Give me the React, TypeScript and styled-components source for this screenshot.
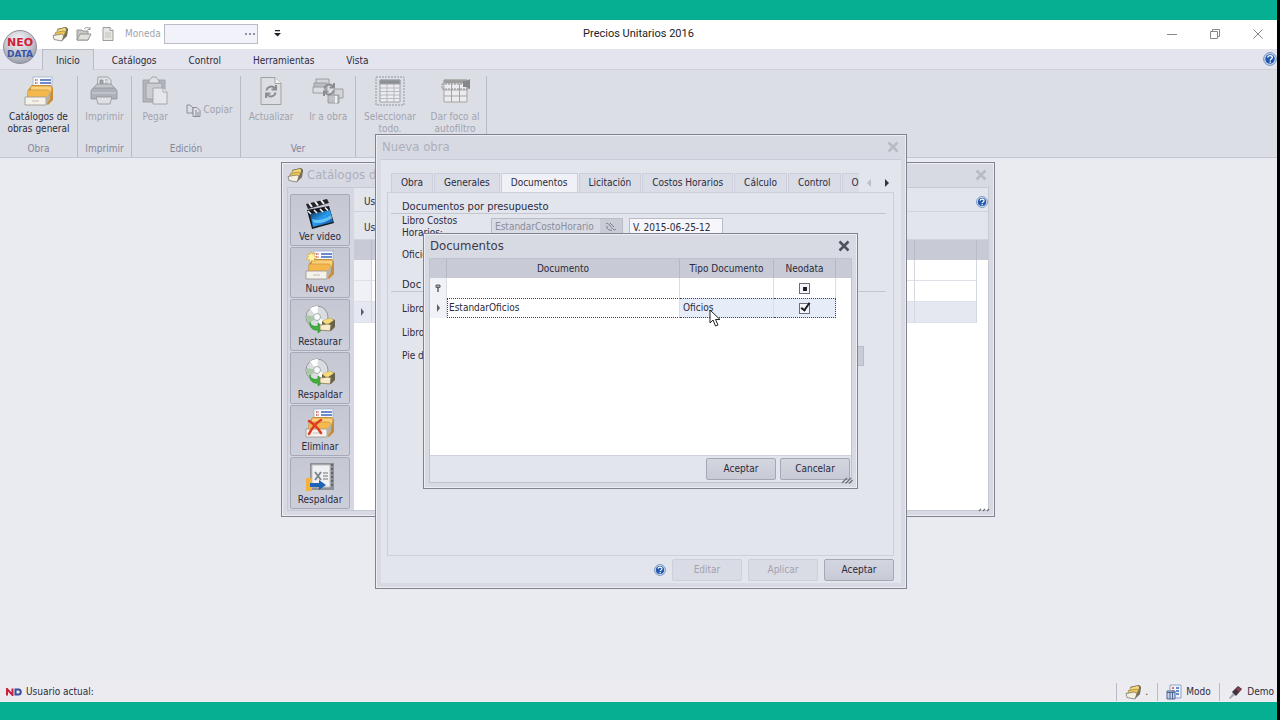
import React, { ReactNode } from "react";
import styled, { createGlobalStyle, css } from "styled-components";

const c = {
  teal: "#06ae92",
  ribbon: "#dcdee6",
  line: "#b9bbc7",
  frame: "#80828f",
  header: "#c8cad5",
  panel: "#e3e5ed",
  text: "#2b2b3c",
  muted: "#a2a3ae",
};

const Global = createGlobalStyle`
  *, *::before, *::after { box-sizing: border-box; }
  body { margin: 0; }
  body, button, input, select, table {
    font-family: "DejaVu Sans Condensed", Tahoma, "Noto Sans", sans-serif;
    font-size: 10px;
    line-height: 12px;
    color: ${c.text};
  }
  button { cursor: default; }
  svg { display: block; flex: none; }
`;

/* ---------- Shell ---------- */

const Shell = styled.div`
  display: flex;
  flex-direction: column;
  min-height: 100vh;
  overflow: hidden;
  border-right: 3px solid #000;
  background: ${c.teal};
`;
const Band = styled.div<{ $h: number }>`
  height: ${(p) => p.$h}px;
  background: ${c.teal};
`;
const AppFrame = styled.div`
  position: relative;
  flex: 1;
  display: flex;
  flex-direction: column;
  background: #e9ebf0;
`;

const TitleBar = styled.header`
  display: grid;
  grid-template-columns: 1fr auto 1fr;
  align-items: center;
  height: 29px;
  padding-bottom: 2px;
  background: #fff;
`;
const QuickAccess = styled.div`
  display: flex;
  align-items: center;
  padding-left: 48px;
`;
const ToolButton = styled.button`
  display: flex;
  justify-content: center;
  width: 24px;
  padding: 0;
  border: 0;
  background: none;
`;
const CurrencyLabel = styled.label`
  display: flex;
  align-items: center;
  gap: 3px;
  margin-left: 5px;
  color: ${c.muted};
`;
const CurrencyBox = styled.span`
  display: flex;
  align-items: center;
  width: 94px;
  height: 20px;
  padding-right: 2px;
  border: 1px solid ${c.line};
  background: #f2f2fa;
  input { flex: 1; min-width: 0; height: 16px; border: 0; background: none; }
`;
const MoreButton = styled(ToolButton)`
  margin-left: 8px;
`;
const AppTitle = styled.h1`
  margin: 0;
  font: 400 11px/16px Roboto, "Noto Sans", sans-serif;
  color: #222;
`;
const WindowButtons = styled.div`
  display: flex;
  justify-content: flex-end;
  gap: 19px;
  padding-right: 7px;
`;

const TabRow = styled.nav`
  display: flex;
  align-items: flex-end;
  gap: 4px;
  height: 21px;
  padding-left: 42px;
  border-bottom: 1px solid #cfd0db;
  background: #e4e4ee;
`;
const RibbonTab = styled.button<{ $active?: boolean }>`
  height: 21px;
  margin-bottom: -1px;
  padding: 1px 13px 0;
  border: 1px solid transparent;
  border-bottom: 0;
  background: transparent;
  white-space: nowrap;
  ${(p) => p.$active && css`border-color: ${c.line}; background: ${c.ribbon};`}
`;
const TabHelp = styled.button`
  align-self: center;
  margin-left: auto;
  padding: 0;
  border: 0;
  background: none;
`;
const Logo = styled.div`
  position: absolute;
  left: 3px;
  top: 10px;
`;

const Ribbon = styled.section`
  display: flex;
  height: 88px;
  padding-top: 6px;
  border-bottom: 1px solid #c3c5d0;
  background: ${c.ribbon};
`;
const Group = styled.div<{ $w: number }>`
  display: flex;
  flex-direction: column;
  width: ${(p) => p.$w}px;
  border-right: 1px solid ${c.line};
`;
const GroupBody = styled.div`
  flex: 1;
  display: flex;
  justify-content: space-around;
`;
const GroupCaption = styled.div`
  height: 14px;
  text-align: center;
  color: #85869a;
`;
const RibbonButton = styled.button<{ $w?: number; $row?: boolean }>`
  display: flex;
  flex-direction: ${(p) => (p.$row ? "row" : "column")};
  align-items: center;
  gap: 3px;
  width: ${(p) => (p.$w ? p.$w + "px" : "auto")};
  padding: 0;
  border: 0;
  background: none;
  &:disabled { color: ${c.muted}; }
`;

const StatusBar = styled.footer`
  display: flex;
  align-items: center;
  height: 20px;
  padding: 0 3px 0 6px;
  background: #ebebf0;
`;
const StatusItem = styled.span<{ $sep?: boolean; $w?: number }>`
  display: flex;
  align-items: center;
  gap: 4px;
  height: 18px;
  width: ${(p) => (p.$w ? p.$w + "px" : "auto")};
  padding-left: ${(p) => (p.$sep ? 8 : 0)}px;
  border-left: ${(p) => (p.$sep ? "1px solid " + c.line : "0")};
  white-space: nowrap;
`;
const Spacer = styled.div`
  flex: 1;
`;

/* ---------- Windows ---------- */

const WindowBox = styled.section<{ $x: number; $y: number; $w: number; $h: number }>`
  position: absolute;
  left: ${(p) => p.$x}px;
  top: ${(p) => p.$y}px;
  width: ${(p) => p.$w}px;
  min-height: ${(p) => p.$h}px;
  display: flex;
  flex-direction: column;
  padding: 0 5px 5px;
  border: 1px solid ${c.frame};
  box-shadow: inset 0 0 0 1px #eceef4;
  background: #d8dae3;
`;
const WindowTitle = styled.header`
  display: flex;
  align-items: center;
  gap: 3px;
  height: 24px;
  flex: none;
`;
const WindowCaption = styled.h2<{ $muted?: boolean }>`
  flex: 1;
  margin: 0;
  padding-left: 1px;
  font-size: 13px;
  line-height: 16px;
  font-weight: 400;
  color: ${(p) => (p.$muted ? "#adafbb" : "#3b3b4a")};
`;
const CloseButton = styled.button`
  padding: 0 2px;
  border: 0;
  background: none;
`;
const CatalogBody = styled.div`
  flex: 1;
  display: flex;
  border: 1px solid #c6c8d3;
  background: ${c.panel};
`;
const Sidebar = styled.nav`
  display: flex;
  flex-direction: column;
  gap: 1px;
  width: 66px;
  padding: 6px 4px 1px 2px;
  background: #d5d7e1;
`;
const SideButton = styled.button`
  flex: 1;
  display: flex;
  flex-direction: column;
  align-items: center;
  justify-content: flex-end;
  gap: 1px;
  padding: 0 0 2px;
  border: 1px solid #a7a9b8;
  border-radius: 2px;
  background: linear-gradient(#c5c7d3, #cdcfda);
  white-space: nowrap;
`;
const CatalogMain = styled.div`
  flex: 1;
  display: flex;
  flex-direction: column;
  background: #fff;
`;
const CatalogRow = styled.div<{ $h: number }>`
  display: flex;
  align-items: center;
  justify-content: space-between;
  height: ${(p) => p.$h}px;
  padding: 4px 0 0 10px;
  border-bottom: 1px solid #d0d2dc;
  background: ${c.panel};
`;
const CatalogTable = styled.table`
  width: 100%;
  table-layout: fixed;
  border-spacing: 0;
  th { height: 20px; padding: 0; background: ${c.header}; border-right: 1px solid ${c.line}; }
  td { height: 21px; padding: 0; border-right: 1px solid #d5d7df; border-bottom: 1px solid #e0e1e8; }
  td:first-child { background: #f0f1f6; }
  th:last-child, td:last-child { border-right: 0; }
  td:last-child { border-bottom: 0; background: #fff; }
  tr[aria-selected] td:not(:last-child) { background: #e6e8f1; }
  svg { margin: 0 auto; }
`;
const GripLine = styled.div`
  position: absolute;
  right: 4px;
  bottom: 4px;
`;

const DialogBody = styled.div`
  flex: 1;
  display: flex;
  flex-direction: column;
  padding: 13px 7px 0 6px;
  border-top: 1px solid #c9cbd6;
  background: ${c.panel};
`;
const DialogTabs = styled.div`
  display: flex;
  align-items: stretch;
  gap: 1px;
  height: 19px;
  padding-left: 4px;
`;
const DialogTab = styled.button<{ $active?: boolean; $clip?: boolean }>`
  padding: ${(p) => (p.$clip ? "0 0 0 9px" : "0 9px")};
  border: 1px solid #cccedb;
  border-bottom: 0;
  ${(p) => p.$clip && css`border-right: 0;`}
  background: ${(p) => (p.$active ? "#f0f1f7" : "#dadce6")};
  white-space: nowrap;
`;
const ScrollArrows = styled.div`
  display: flex;
  align-items: center;
  gap: 4px;
  margin-left: auto;
`;
const ArrowButton = styled.button`
  display: flex;
  justify-content: center;
  width: 14px;
  padding: 0;
  border: 0;
  background: none;
`;
const TabPanel = styled.div`
  flex: 1;
  display: flex;
  flex-direction: column;
  padding: 7px 7px 0 3px;
  border: 1px solid #cdcfda;
`;
const SectionTitle = styled.h3`
  margin: 0;
  padding-left: 11px;
  font-size: 11px;
  line-height: 13px;
  font-weight: 400;
  border-bottom: 1px solid #c3c5d0;
`;
const Field = styled.div<{ $h: number }>`
  display: flex;
  align-items: center;
  gap: 6px;
  height: ${(p) => p.$h}px;
  padding: 0 22px 0 11px;
  label { width: 83px; }
`;
const TextBox = styled.input<{ $w: number }>`
  width: ${(p) => p.$w}px;
  height: 18px;
  padding: 0 3px;
  border: 1px solid ${c.line};
  background: #f6f6fb;
`;
const LookupBox = styled.span`
  display: flex;
  width: 132px;
  height: 18px;
  border: 1px solid ${c.line};
  background: #d9dbe4;
  input { flex: 1; min-width: 0; padding: 0 3px; border: 0; background: none; color: #8b8d9b; }
  button { width: 22px; padding: 0 4px; border: 0; background: #c9cbd5; }
`;
const Combo = styled.select`
  appearance: none;
  flex: 1;
  height: 20px;
  border: 1px solid ${c.line};
  background: #c9cbd6;
`;
const Footer = styled.footer`
  display: flex;
  align-items: center;
  justify-content: flex-end;
  gap: 6px;
  height: 27px;
`;
const PushButton = styled.button`
  width: 70px;
  height: 22px;
  padding: 0;
  border: 1px solid #a5a7b5;
  border-radius: 2px;
  background: linear-gradient(#d3d5df, #c8cad6);
  &:disabled { color: ${c.muted}; border-color: #cdcfda; background: #dadce5; }
`;
const HelpButton = styled(TabHelp)`
  margin: 0;
`;

const DocsBody = styled.div`
  flex: 1;
  display: flex;
  flex-direction: column;
  border: 1px solid #c0c2cf;
  background: #fff;
`;
const DocsTable = styled.table`
  width: 100%;
  table-layout: fixed;
  border-spacing: 0;
  th {
    height: 19px;
    padding: 0;
    font-weight: 400;
    background: ${c.header};
    border-right: 1px solid #b6b8c5;
  }
  th:last-child { border-right: 0; }
  td {
    height: 20px;
    padding: 0 3px;
    border-right: 1px solid #dcdde6;
    vertical-align: middle;
  }
  td:first-child { padding: 0; background: #f1f2f7; }
  td:last-child { border-right: 0; }
  svg { margin: 0 auto; }
`;
const FilterInput = styled.input`
  width: 100%;
  height: 16px;
  padding: 0;
  border: 0;
  background: none;
`;
const FocusCell = styled.td<{ $edge?: "left" | "right"; $tint?: boolean }>`
  && {
    border-top: 1px dotted #444;
    border-bottom: 1px dotted #444;
    ${(p) => p.$edge === "left" && css`border-left: 1px dotted #444; padding-left: 1px;`}
    ${(p) => p.$edge === "right" && css`border-right: 1px dotted #444;`}
    background: ${(p) => (p.$tint ? "#e6ecf8" : "#fff")};
  }
`;
const Check = styled.input`
  appearance: none;
  position: relative;
  display: block;
  width: 11px;
  height: 11px;
  margin: 0 auto;
  border: 1px solid #6c6d7b;
  background: #f6f6fa;
  &::after { content: ""; position: absolute; }
  &:checked::after {
    left: 3px;
    top: -3px;
    width: 5px;
    height: 10px;
    border: solid #1e1e2a;
    border-width: 0 2px 2px 0;
    transform: rotate(35deg);
  }
  &[data-mixed]::after { left: 3px; top: 3px; width: 4px; height: 4px; background: #1e1e2a; }
`;
const DocsFooter = styled.footer`
  display: flex;
  justify-content: flex-end;
  gap: 4px;
  height: 27px;
  padding: 2px 1px 0 0;
  border-top: 1px solid #cfd1db;
  background: ${c.panel};
`;
const Pointer = styled.div`
  position: absolute;
  left: 709px;
  top: 289px;
`;

/* ---------- Icons ---------- */

type IconProps = { size?: number };

const Folders = ({ size = 16 }: IconProps) => (
  <svg width={size} height={size} viewBox="0 0 16 16">
    <path d="M5 3 14 1l2 2-1 7-3 2z" fill="#5b5648" />
    <path d="M5.5 3.5 13 1.5l1.5 1.500-1 4-9 1z" fill="#f6dc7c" stroke="#86764a" strokeWidth=".6" />
    <path d="m3.500 6.500 8-1.500 2 1-1.500 4-9.500 1z" fill="#f0c851" stroke="#86764a" strokeWidth=".6" />
    <path d="m1 9.500 8.500-1.500 2.500 1.500-2 5.500-8-1.500z" fill="#f4f0e2" stroke="#6d6a66" strokeWidth=".7" />
    <path d="m10 15 2-5.500L15 4v6z" fill="#77705d" />
  </svg>
);

const CardFile = ({ size = 32, mark }: IconProps & { mark?: "new" | "delete" }) => (
  <svg width={size} height={size} viewBox="0 0 32 32">
    <rect x="10" y="1" width="19" height="14" fill="#fbfcff" stroke="#9fb0cc" strokeWidth=".8" />
    <path d="M12 4h3M12 7h3" stroke="#c2453d" strokeWidth="1.500" strokeDasharray="1.500 1" />
    <path d="M17 4h11M17 7h11" stroke="#3d66bd" strokeWidth="1.600" />
    <path d="M5 14 9 9h19l2 3v12l-5 5z" fill="#c98e35" />
    <path d="M8 10h20l1 2-2 8H6z" fill="#fbd078" stroke="#c08c3c" strokeWidth=".6" />
    <path d="M5 14h20l2 2-2 9H4z" fill="#f5b84d" stroke="#c08c3c" strokeWidth=".6" />
    <path d="M2 21h21v8H2z" fill="#f5f2ec" stroke="#9a958c" strokeWidth=".8" />
    <path d="m23 21 4-5v7l-4 6z" fill="#b9b2a6" />
    <path d="M9 24h7v2H9z" fill="#dcd8cf" />
    {mark === "new" && (
      <path d="m7 1 1.300 3.200L11.500 3 10 6l3 1.500-3 1.200 1 3.100-3.200-1.600L6 13l-.6-3.300L2 9.500 4.600 7 3 4l3 .6z" fill="#fff3a8" stroke="#d7ad48" strokeWidth=".7" />
    )}
    {mark === "delete" && (
      <path d="M5 13c5 3 9 7 12 12M17 12C12 15 8 20 5 26" fill="none" stroke="#dd3b28" strokeWidth="2.600" strokeLinecap="round" />
    )}
  </svg>
);

const Disc = () => (
  <svg width="32" height="32" viewBox="0 0 32 32">
    <circle cx="13" cy="14" r="11" fill="#d9dddf" stroke="#8f979b" />
    <path d="M13 14 6 5.500A11 11 0 0 1 14 3z" fill="#fff" />
    <path d="m13 14 10 5a11 11 0 0 1-6 5z" fill="#fff" />
    <path d="M13 14 2.500 12A11 11 0 0 0 5 21z" fill="#a9c9a6" />
    <circle cx="13" cy="14" r="3.500" fill="#f8f9fa" stroke="#a4abaf" />
    <path d="M6 19c1 4 4 5 8 4v-3l6 5-6 5v-3c-5 1-9-3-8-8z" fill="#42b13c" stroke="#2a812b" strokeWidth=".6" />
    <path d="m18 18 8-3 5 2v7l-4 4-9-1z" fill="#68614e" />
    <path d="m18 18 8-3 4 2-7 5z" fill="#f5db77" />
    <path d="m16 22 8-1 3 1-1 6-10-1z" fill="#f6ecc9" stroke="#80724e" strokeWidth=".7" />
  </svg>
);

const Clapper = () => (
  <svg width="34" height="34" viewBox="0 0 34 34">
    <defs>
      <linearGradient id="film" x1="0" y1="0" x2="1" y2="1">
        <stop offset="0" stopColor="#0c2b52" />
        <stop offset=".5" stopColor="#2a9df0" />
        <stop offset="1" stopColor="#0d3f86" />
      </linearGradient>
    </defs>
    <path d="M3 8 24 3l2 4L5 13z" fill="#23252b" />
    <path d="m6 7 3 4M12 5.500l3 4M18 4l3 4" stroke="#f4f4f4" strokeWidth="2" />
    <path d="m4 14 22-4 5 17-22 6z" fill="#15181f" />
    <path d="m7 18 20-4 3 12-20 5z" fill="url(#film)" />
    <path d="M9 23c6 2 12 1 19-4l1 3c-7 5-13 6-19 4z" fill="#7fd4ff" opacity=".75" />
    <path d="m5 15 3 3M11 14l3 3M17 13l3 3M22 11.500l3 3" stroke="#f4f4f4" strokeWidth="1.600" />
  </svg>
);

const ExportSheet = () => (
  <svg width="32" height="32" viewBox="0 0 32 32">
    <path d="M6 2h24v27H6z" fill="#8e9096" />
    <path d="M8 4h18v22H8z" fill="#f0f1f3" stroke="#bfc1c6" />
    <path d="M28 3v24" stroke="#63656c" strokeWidth="2" strokeDasharray="2 2" />
    <path d="m11 11 6 8m0-8-6 8" stroke="#7f868d" strokeWidth="2" />
    <path d="M19 12h5M19 15h5M19 18h5" stroke="#9aa19b" strokeWidth="1.500" />
    <path d="M2 17h6v13H2z" fill="#f3b23f" />
    <path d="M6 22h9v-3l7 5-7 5v-3H6z" fill="#1d62b4" />
  </svg>
);

const OpenFolder = () => (
  <svg width="16" height="16" viewBox="0 0 16 16" stroke="#8d8f8d" strokeWidth=".9">
    <path d="M1 4h5l1 1h5v9H1z" fill="#c6c8c4" />
    <path d="M1 14 4 8h11l-3 6z" fill="#e0e1dd" />
    <path d="M8 3c2-2 4-2 6 0m0-2v2.500h-2.500" fill="none" />
  </svg>
);

const Page = () => (
  <svg width="16" height="16" viewBox="0 0 16 16" stroke="#929490" strokeWidth=".9">
    <path d="M3 1.500h7l3 3v10H3z" fill="#e6e7e4" />
    <path d="M10 1.500v3h3" fill="#fafafa" />
    <path d="M5 7h6M5 9h6M5 11h6" stroke="#bcbebb" />
  </svg>
);

const Printer = () => (
  <svg width="32" height="32" viewBox="-1 0 32 32" stroke="#90929a" strokeWidth=".8">
    <path d="M9 1h10l3 3v9H8z" fill="#e2e3e8" />
    <path d="M11 4h3v4h-3zM16 4h3M16 7h3" fill="#a2a4ac" />
    <path d="m5 11 3-3h14l3 3v5H5z" fill="#c3c5cc" />
    <path d="M2 16c0-3 2-4 4-4h18c2 0 4 1 4 4v7H2z" fill="#aeb0b8" />
    <path d="M3 17h24" stroke="#dfe0e6" />
    <path d="M7 21h16l-2 7H9z" fill="#dfe0e5" />
  </svg>
);

const Clipboard = () => (
  <svg width="32" height="32" viewBox="-1 0 32 32" stroke="#989aa2" strokeWidth=".8">
    <path d="M3 4h22v22H3z" fill="#b5b7be" />
    <path d="M6 7h16v16H6z" fill="#cbccd3" />
    <path d="M9 5c0-2 3-2 3-4h4c0 2 3 2 3 4v2H9z" fill="#dfe0e6" />
    <path d="M13 12h10l4 4v12H13z" fill="#e5e6eb" />
    <path d="M23 12v4h4" fill="#f4f4f8" />
  </svg>
);

const CopyPages = () => (
  <svg width="15" height="14" viewBox="0 0 15 14" stroke="#8c8e98" fill="#dcdde4">
    <path d="M1 2v8h6V5L4 2z" />
    <path d="M7 4.500h4l3 3v6H7z" />
    <path d="M9 8h2M9 10h4M9 12h4" />
  </svg>
);

const Reload = () => (
  <g fill="none" stroke="#8b8d93" strokeWidth="2">
    <path d="M9.500 14.500c.5-4 6-5.500 8.500-2M19 9v4.500h-4.500M18.500 16.500c-.5 4-6 5.500-8.500 2M9 22v-4.500h4.500" />
  </g>
);

const RefreshPage = () => (
  <svg width="30" height="32" viewBox="-1 0 30 32">
    <path d="M4 1.500h14l6 6v21H4z" fill="#dddee3" stroke="#9fa29c" />
    <path d="M18 1.500v6h6" fill="#f4f5f7" stroke="#9fa29c" />
    <Reload />
  </svg>
);

const GoTo = () => (
  <svg width="32" height="32" viewBox="0 0 32 32" stroke="#8e9096" strokeWidth=".8">
    <path d="M4 3h13v6H4z" fill="#d3d4d9" />
    <path d="M2 7h13v7H2z" fill="#bcbec4" />
    <path d="M1 11h12v6H1z" fill="#dcdde2" />
    <path d="M22 13h9v9h-9z" fill="#d2d4d8" />
    <path d="M16 19h11v8H16z" fill="#bfc1c6" />
    <path d="M24 20v7" stroke="#f0f1f3" strokeWidth="2" />
    <g transform="translate(3 -2)"><Reload /></g>
  </svg>
);

const SelectGrid = () => (
  <svg width="32" height="32" viewBox="-1 0 32 32" fill="none" stroke="#a0a2aa">
    <rect x="1" y="1" width="28" height="28" strokeDasharray="2 1" stroke="#94969e" />
    <path d="M5 4h20v22H5z" fill="#ececf1" />
    <path d="M5 4h20v4H5z" fill="#8d8f96" />
    <path d="M5 12h20M5 15.500h20M5 19h20M5 22.500h20M12 8v18M19 8v18" stroke="#b7b9c1" />
  </svg>
);

const FilterGrid = () => (
  <svg width="32" height="32" viewBox="-2 0 32 32" fill="none" stroke="#a3a59f">
    <path d="M3 4h23v22H3z" fill="#ececf0" />
    <path d="M3 4h23v3H3z" fill="#999b9f" />
    <path d="M3 14h23M3 20h23M10.500 8v18M18.500 8v18" />
    <path d="M1 8h27v5H1z" strokeDasharray="2 1" stroke="#8c8e94" />
    <path d="M22 5h3l4-2v10l-4-2h-3z" fill="#85878d" stroke="none" />
  </svg>
);

const Help = ({ size = 12 }: IconProps) => (
  <svg width={size} height={size} viewBox="0 0 14 14">
    <circle cx="7" cy="7" r="6.300" fill="#dce8f7" stroke="#6486b6" />
    <circle cx="7" cy="7" r="4.800" fill="#2257b0" />
    <path d="M4.800 5.500C5 3 9.500 3 9.300 5.500 9.200 7 7.200 7 7.200 8.400M7.200 9.400v1.300" fill="none" stroke="#fff" strokeWidth="1.400" />
  </svg>
);

const Cross = ({ muted }: { muted?: boolean }) => (
  <svg width="12" height="12" viewBox="0 0 12 12">
    <path d="m1.500 1.500 9 9m0-9-9 9" stroke={muted ? "#b8bac4" : "#50515d"} strokeWidth="2.600" />
  </svg>
);

const Triangle = ({ left, muted }: { left?: boolean; muted?: boolean }) => (
  <svg width="6" height="8" viewBox="0 0 6 8">
    <path d={left ? "M5 0v8L1 4z" : "M1 0v8l4-4z"} fill={muted ? "#bcbecb" : "#343543"} />
  </svg>
);

const RowMark = () => (
  <svg width="5" height="8" viewBox="0 0 5 8">
    <path d="M1 0v8l3-4z" fill="#5b5c6a" />
  </svg>
);

const Pin = () => (
  <svg width="6" height="8" viewBox="0 0 6 8">
    <path d="M1 1h4v2.500H1z" fill="#a0a1ac" stroke="#5e5f6c" />
    <path d="M3 4v4" stroke="#5e5f6c" strokeWidth="1.500" />
  </svg>
);

const Grip = () => (
  <svg width="12" height="10" viewBox="0 0 12 10">
    <path d="m1 9 5-5M4.500 9.500 10 4M8 9.500 11.500 6" stroke="#6b6c78" strokeWidth="1.200" />
  </svg>
);

const SmallGrip = () => (
  <svg width="12" height="4" viewBox="0 0 12 4">
    <path d="m1 3 2-2M5 3l2-2M9 3l2-2" stroke="#6b6c78" strokeWidth="1.200" />
  </svg>
);

const BrandMark = () => (
  <svg width="34" height="34" viewBox="0 0 34 34" fontFamily="DejaVu Sans, sans-serif" fontWeight="700" textAnchor="middle">
    <defs>
      <radialGradient id="ball" cx=".45" cy=".3" r=".7">
        <stop offset="0" stopColor="#f7f7fa" />
        <stop offset=".6" stopColor="#c5c6cf" />
        <stop offset="1" stopColor="#9c9eaa" />
      </radialGradient>
    </defs>
    <circle cx="17" cy="17" r="16.500" fill="url(#ball)" stroke="#8f919d" />
    <text x="17" y="16" fill="#cf1f36" fontSize="11">NEO</text>
    <text x="17" y="27" fill="#3656a8" fontSize="9">DATA</text>
  </svg>
);

const MiniBrand = () => (
  <svg width="16" height="8" viewBox="0 0 16 8" fill="none" strokeWidth="2">
    <path d="M1 7.500V1l5.500 6V.5" stroke="#c9233b" />
    <path d="M9.500 1.500h3c3 0 3 5 0 5h-3z" stroke="#34519f" />
  </svg>
);

const ModeIcon = () => (
  <svg width="16" height="16" viewBox="0 0 16 16">
    <path d="M4 1h11v13H4z" fill="#edf2fb" stroke="#8ea3c6" />
    <path d="M6 4h2M6 7h2" stroke="#d0443c" strokeWidth="1.500" />
    <path d="M10 4h3M10 7h3M10 10h3" stroke="#3c6abc" strokeWidth="1.500" />
    <path d="M1 7h8v8H1z" fill="#c8d4ea" stroke="#4f6792" />
    <path d="M1 8.500h8M4 9v6M6.500 9v6" stroke="#4f6792" />
  </svg>
);

const Plug = () => (
  <svg width="15" height="14" viewBox="0 0 15 14">
    <path d="m1 13 4-5 2 2-5 4z" fill="#a7a9b2" />
    <path d="m4 7 6-6 4 3-6 7z" fill="#41323c" />
    <path d="m8 4 2-2 3 2-2 3z" fill="#8c3b4c" />
  </svg>
);

/* ---------- Parts ---------- */

const Caption = ({ children, muted, icon }: { children: ReactNode; muted?: boolean; icon?: ReactNode }) => (
  <WindowTitle>
    {icon}
    <WindowCaption $muted={muted}>{children}</WindowCaption>
    <CloseButton aria-label="Cerrar"><Cross muted={muted} /></CloseButton>
  </WindowTitle>
);

const sideActions: [string, ReactNode][] = [
  ["Ver video", <Clapper />],
  ["Nuevo", <CardFile mark="new" />],
  ["Restaurar", <Disc />],
  ["Respaldar", <Disc />],
  ["Eliminar", <CardFile mark="delete" />],
  ["Respaldar", <ExportSheet />],
];

const CatalogWindow = () => (
  <WindowBox $x={281} $y={142} $w={714} $h={355}>
    <Caption muted icon={<Folders />}>Catálogos d</Caption>
    <CatalogBody>
      <Sidebar>
        {sideActions.map(([label, icon], i) => (
          <SideButton key={i}>{icon}{label}</SideButton>
        ))}
      </Sidebar>
      <CatalogMain>
        <CatalogRow $h={24}><span>Us</span><Help /></CatalogRow>
        <CatalogRow $h={28}><span>Us</span></CatalogRow>
        <CatalogTable>
          <colgroup><col width="18" /><col /><col width="62" /><col width="11" /></colgroup>
          <thead><tr><th /><th /><th /><th /></tr></thead>
          <tbody>
            <tr><td /><td /><td /><td /></tr>
            <tr><td /><td /><td /><td /></tr>
            <tr aria-selected="true"><td><RowMark /></td><td /><td /><td /></tr>
          </tbody>
        </CatalogTable>
      </CatalogMain>
    </CatalogBody>
    <GripLine><SmallGrip /></GripLine>
  </WindowBox>
);

const dialogTabs = ["Obra", "Generales", "Documentos", "Licitación", "Costos Horarios", "Cálculo", "Control"];

const NewWorkDialog = () => (
  <WindowBox $x={375} $y={114} $w={532} $h={455}>
    <Caption muted>Nueva obra</Caption>
    <DialogBody>
      <DialogTabs>
        {dialogTabs.map((t) => (
          <DialogTab key={t} $active={t === "Documentos"}>{t}</DialogTab>
        ))}
        <DialogTab $clip>O</DialogTab>
        <ScrollArrows>
          <ArrowButton disabled aria-label="Anterior"><Triangle left muted /></ArrowButton>
          <ArrowButton aria-label="Siguiente"><Triangle /></ArrowButton>
        </ScrollArrows>
      </DialogTabs>
      <TabPanel>
        <SectionTitle>Documentos por presupuesto</SectionTitle>
        <Field $h={26}>
          <label htmlFor="costos">Libro Costos Horarios:</label>
          <LookupBox>
            <input id="costos" defaultValue="EstandarCostoHorario" readOnly />
            <button aria-label="Buscar">
              <svg width="14" height="12" viewBox="0 0 14 12" fill="none" stroke="#777985">
                <path d="M2 3c2-2 3 1 5 3s3 4 5 2M3 5c-1 3 3 5 5 4M6 2l4 4" />
              </svg>
            </button>
          </LookupBox>
          <TextBox $w={94} aria-label="Versión" defaultValue="V. 2015-06-25-12" />
        </Field>
        <Field $h={30}>Oficios</Field>
        <Field $h={8} />
        <SectionTitle>Doc</SectionTitle>
        <Field $h={34}>Libro</Field>
        <Field $h={14}>Libro</Field>
        <Field $h={32}>
          <label htmlFor="pie">Pie de</label>
          <Combo id="pie" />
        </Field>
      </TabPanel>
      <Footer>
        <HelpButton aria-label="Ayuda"><Help /></HelpButton>
        <PushButton disabled>Editar</PushButton>
        <PushButton disabled>Aplicar</PushButton>
        <PushButton>Aceptar</PushButton>
      </Footer>
    </DialogBody>
  </WindowBox>
);

const DocumentsDialog = () => (
  <WindowBox $x={423} $y={213} $w={435} $h={256}>
    <Caption>Documentos</Caption>
    <DocsBody>
      <DocsTable>
        <colgroup><col width="17" /><col /><col width="94" /><col width="62" /><col width="15" /></colgroup>
        <thead>
          <tr><th /><th>Documento</th><th>Tipo Documento</th><th>Neodata</th><th /></tr>
        </thead>
        <tbody>
          <tr>
            <td><Pin /></td>
            <td><FilterInput aria-label="Filtrar documento" /></td>
            <td><FilterInput aria-label="Filtrar tipo" /></td>
            <td><Check type="checkbox" data-mixed aria-label="Filtrar Neodata" /></td>
            <td />
          </tr>
          <tr>
            <td><RowMark /></td>
            <FocusCell $edge="left">EstandarOficios</FocusCell>
            <FocusCell $tint>Oficios</FocusCell>
            <FocusCell $tint $edge="right"><Check type="checkbox" defaultChecked aria-label="Neodata" /></FocusCell>
            <td />
          </tr>
        </tbody>
      </DocsTable>
      <Spacer />
      <DocsFooter>
        <PushButton>Aceptar</PushButton>
        <PushButton>Cancelar</PushButton>
      </DocsFooter>
    </DocsBody>
    <GripLine><Grip /></GripLine>
  </WindowBox>
);

export default function App() {
  return (
    <Shell>
      <Global />
      <Band $h={20} />
      <AppFrame>
        <TitleBar>
          <QuickAccess>
            <ToolButton aria-label="Catálogos"><Folders /></ToolButton>
            <ToolButton aria-label="Abrir" disabled><OpenFolder /></ToolButton>
            <ToolButton aria-label="Nuevo" disabled><Page /></ToolButton>
            <CurrencyLabel>
              Moneda
              <CurrencyBox>
                <input />
                <svg width="10" height="2" viewBox="0 0 10 2" fill="#8d8fa6">
                  <path d="M0 0h2v2H0zM4 0h2v2H4zM8 0h2v2H8z" />
                </svg>
              </CurrencyBox>
            </CurrencyLabel>
            <MoreButton aria-label="Más">
              <svg width="7" height="7" viewBox="0 0 7 7"><path d="M1 0h5v1.300H1zM0 3h7L3.500 6.500z" fill="#222" /></svg>
            </MoreButton>
          </QuickAccess>
          <AppTitle>Precios Unitarios 2016</AppTitle>
          <WindowButtons>
            <ToolButton aria-label="Minimizar">
              <svg width="10" height="10" viewBox="0 0 10 10"><path d="M0 5.500h10" stroke="#888" /></svg>
            </ToolButton>
            <ToolButton aria-label="Restaurar">
              <svg width="10" height="10" viewBox="0 0 10 10" fill="none" stroke="#888">
                <path d="M.5 2.500h7v7h-7zM2.500 2.500v-2h7v7h-2" />
              </svg>
            </ToolButton>
            <ToolButton aria-label="Cerrar">
              <svg width="10" height="10" viewBox="0 0 10 10"><path d="m.5.5 9 9m0-9-9 9" stroke="#888" /></svg>
            </ToolButton>
          </WindowButtons>
        </TitleBar>

        <TabRow>
          {["Inicio", "Catálogos", "Control", "Herramientas", "Vista"].map((t, i) => (
            <RibbonTab key={t} $active={i === 0}>{t}</RibbonTab>
          ))}
          <TabHelp aria-label="Ayuda"><Help size={14} /></TabHelp>
        </TabRow>
        <Logo><BrandMark /></Logo>

        <Ribbon>
          <Group $w={78}>
            <GroupBody>
              <RibbonButton $w={70}><CardFile />Catálogos de obras general</RibbonButton>
            </GroupBody>
            <GroupCaption>Obra</GroupCaption>
          </Group>
          <Group $w={54}>
            <GroupBody>
              <RibbonButton disabled><Printer />Imprimir</RibbonButton>
            </GroupBody>
            <GroupCaption>Imprimir</GroupCaption>
          </Group>
          <Group $w={109}>
            <GroupBody>
              <RibbonButton disabled><Clipboard />Pegar</RibbonButton>
              <RibbonButton disabled $row><CopyPages />Copiar</RibbonButton>
            </GroupBody>
            <GroupCaption>Edición</GroupCaption>
          </Group>
          <Group $w={115}>
            <GroupBody>
              <RibbonButton disabled><RefreshPage />Actualizar</RibbonButton>
              <RibbonButton disabled><GoTo />Ir a obra</RibbonButton>
            </GroupBody>
            <GroupCaption>Ver</GroupCaption>
          </Group>
          <Group $w={131}>
            <GroupBody>
              <RibbonButton disabled $w={62}><SelectGrid />Seleccionar todo.</RibbonButton>
              <RibbonButton disabled $w={56}><FilterGrid />Dar foco al autofiltro</RibbonButton>
            </GroupBody>
          </Group>
        </Ribbon>

        <Spacer />

        <CatalogWindow />
        <NewWorkDialog />
        <DocumentsDialog />
        <Pointer>
          <svg width="12" height="18" viewBox="0 0 12 18">
            <path d="M1 1v13l3-3 2.500 6 2.500-1-2.500-5.500H11z" fill="#fff" stroke="#222" />
          </svg>
        </Pointer>

        <StatusBar>
          <StatusItem><MiniBrand />Usuario actual:</StatusItem>
          <Spacer />
          <StatusItem $sep $w={41}><Folders />.</StatusItem>
          <StatusItem $sep $w={62}><ModeIcon />Modo</StatusItem>
          <StatusItem $sep><Plug />Demo</StatusItem>
        </StatusBar>
      </AppFrame>
      <Band $h={18} />
    </Shell>
  );
}
